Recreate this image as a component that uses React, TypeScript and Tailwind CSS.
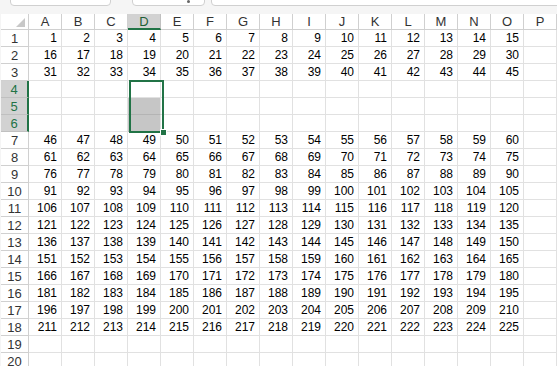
const COLS = ["A", "B", "C", "D", "E", "F", "G", "H", "I", "J", "K", "L", "M", "N", "O", "P"];
const ROWS = Array.from({ length: 20 }, (_, i) => i + 1);

function cellValue(row: number, col: number) {
  if (col > 15 || row > 18) return "";
  if (row <= 3) return String((row - 1) * 15 + col);
  if (row <= 6) return "";
  return String((row - 4) * 15 + col);
}

function TopBar() {
  return (
    <div className="relative h-[14px] bg-[#f5f5f5]">
      <div className="absolute left-[10px] top-[-10px] h-[16px] w-[101px] rounded-[4px] border border-[#d0d0d0] bg-white" />
      <div className="absolute left-[132px] top-[-10px] h-[16px] w-[73px] rounded-[4px] border border-[#d0d0d0] bg-white">
        <span className="absolute left-[54px] top-[9px] h-[3px] w-[3px] rounded-full bg-[#666]" />
      </div>
      <div className="absolute left-[211px] top-[-10px] h-[16px] w-[360px] rounded-[4px] border border-[#d0d0d0] bg-white" />
    </div>
  );
}

function Corner() {
  return (
    <div className="relative h-[16px] border-b border-r border-[#d0d0d0] bg-white">
      <svg className="absolute bottom-[2px] right-[3px]" width="9" height="9" viewBox="0 0 9 9">
        <polygon points="9,0 9,9 0,9" fill="#c8c8c8" />
      </svg>
    </div>
  );
}

export default function App() {
  return (
    <div
      className="relative h-[366px] w-[557px] overflow-hidden bg-white text-[12px] text-black"
      style={{ fontFamily: '"Liberation Sans", Arial, sans-serif' }}
    >
      <TopBar />
      <div className="flex items-start">
        <div className="h-[366px] w-[2px] bg-[#f5f5f5]" />
        <div className="h-[366px] w-[1px] bg-[#2f6e45]" />
        <div className="grid grid-cols-[28px_repeat(16,33px)] content-start">
          <Corner />
          {COLS.map((c) => (
            <div
              key={c}
              className={
                c === "D"
                  ? "flex h-[16px] items-center justify-center border-b-2 border-r border-b-[#217346] border-r-[#c0c0c0] bg-[#d2d2d2] pt-[1px] text-[13px] leading-[14px] text-[#1f5f38]"
                  : "flex h-[16px] items-center justify-center border-b border-r border-[#d0d0d0] bg-white text-[13px] leading-[14px] text-[#333]"
              }
            >
              {c}
            </div>
          ))}
          {ROWS.map((r) => {
            const sel = r >= 4 && r <= 6;
            return [
              <div
                key={`h${r}`}
                className={
                  sel
                    ? "flex h-[17px] items-center justify-center border-b border-r-2 border-b-[#c0c0c0] border-r-[#217346] bg-[#d2d2d2] pt-[1px] text-[13px] leading-[14px] text-[#217346]"
                    : "flex h-[17px] items-center justify-center border-b border-r border-[#d0d0d0] bg-white pt-[1px] text-[13px] leading-[14px] text-[#333]"
                }
              >
                {r}
              </div>,
              ...COLS.map((_, ci) => {
                const col = ci + 1;
                const gray = col === 4 && (r === 5 || r === 6);
                return (
                  <div
                    key={`${r}-${col}`}
                    className={
                      gray
                        ? "flex h-[17px] items-end justify-end border-b border-r border-b-[#b4b4b4] border-r-[#e1e1e1] bg-[#c6c6c6] pb-[1px] pr-[4px] leading-[14px]"
                        : "flex h-[17px] items-end justify-end border-b border-r border-[#e1e1e1] pb-[1px] pr-[4px] leading-[14px]"
                    }
                  >
                    {cellValue(r, col)}
                  </div>
                );
              }),
            ];
          })}
        </div>
      </div>
      <div className="pointer-events-none absolute left-[129px] top-[80px] h-[53px] w-[35px] border-2 border-[#217346]" />
      <div className="pointer-events-none absolute left-[160px] top-[129px] h-[7px] w-[7px] border border-white bg-[#217346]" />
    </div>
  );
}
